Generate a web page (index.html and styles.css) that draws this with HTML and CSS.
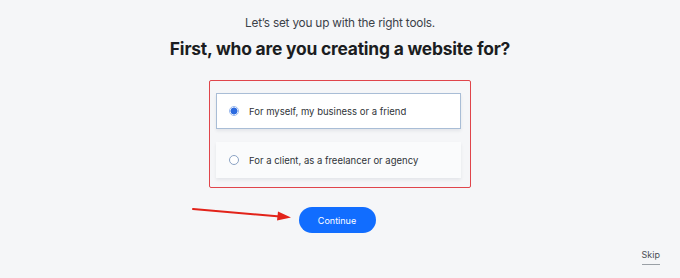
FILE: index.html
```html
<!DOCTYPE html>
<html lang="en">
<head>
    <meta charset="UTF-8">
    <meta name="viewport" content="width=device-width, initial-scale=1.0">
    <title>Website setup</title>
    <link rel="stylesheet" href="styles.css">
</head>
<body>
    <div class="page">
        <!-- Cabeçalho com as perguntas -->
        <p class="subtitle">Let’s set you up with the right tools.</p>
        <h1 class="title">First, who are you creating a website for?</h1>

        <!-- Opções marcadas em vermelho -->
        <div class="options">
            <label class="option selected">
                <span class="radio"></span>
                <span class="label">For myself, my business or a friend</span>
            </label>
            <label class="option">
                <span class="radio"></span>
                <span class="label">For a client, as a freelancer or agency</span>
            </label>
        </div>

        <div class="actions">
            <!-- Seta vermelha apontando para o botão -->
            <svg class="arrow" width="104" height="16" viewBox="0 0 104 16">
                <path d="M1 2 L88 9.5" stroke="#e2231a" stroke-width="2" stroke-linecap="round"/>
                <path d="M86 4.5 L99 10.5 L85 13.5 Z" fill="#e2231a"/>
            </svg>
            <button class="continue">Continue</button>
        </div>
    </div>

    <a class="skip" href="#">Skip</a>
</body>
</html>
```

FILE: styles.css
```css
/* Fundo e fonte da página */
body {
    margin: 0;
    height: 278px;
    background-color: #f5f6f8;
    font-family: Inter, "Noto Sans", sans-serif;
    color: #20303c;
    position: relative;
    overflow: hidden;
}

.page {
    display: flex;
    flex-direction: column;
    align-items: center;
    padding-top: 16px;
}

.subtitle {
    margin: 0;
    font-size: 11.8px;
    color: #3b4148;
    letter-spacing: -0.2px;
}

.title {
    margin: 8px 0 0;
    font-size: 17.4px;
    font-weight: 700;
    color: #1b1d21;
    letter-spacing: -0.2px;
}

/* Caixa vermelha em volta das opções */
.options {
    margin-top: 21px;
    width: 245px;
    padding: 12px 9px 9px 6px;
    border: 1.5px solid #e0454b;
    border-radius: 2px;
    display: flex;
    flex-direction: column;
    gap: 13px;
}

.option {
    height: 34px;
    display: flex;
    align-items: center;
    padding-left: 12px;
    background: #fafbfc;
    border: 1px solid transparent;
    box-shadow: 0 2px 3px rgba(20, 40, 70, 0.08);
    font-size: 9.5px;
    color: #2f3439;
    cursor: pointer;
}

.option.selected {
    background: #fff;
    border-color: #a9bdd6;
}

.radio {
    width: 8px;
    height: 8px;
    border: 1px solid #8ba3c4;
    border-radius: 50%;
    margin-right: 10px;
    background: #fff;
    box-sizing: content-box;
}

.option.selected .radio {
    border-color: #9bb9ee;
    background: radial-gradient(circle, #2d6be0 0 3.2px, #fff 3.8px);
}

/* Botão continuar com a seta ao lado */
.actions {
    margin-top: 19px;
    margin-right: 6px;
    position: relative;
}

.continue {
    width: 77px;
    height: 26px;
    border: none;
    border-radius: 13px;
    background-color: #116dff;
    color: #fff;
    font-family: inherit;
    font-size: 9px;
    cursor: pointer;
}

.arrow {
    position: absolute;
    left: -107px;
    top: 0;
}

.skip {
    position: absolute;
    right: 20px;
    bottom: 13px;
    font-size: 9px;
    color: #4a4f55;
    text-decoration: none;
    padding-bottom: 4px;
    border-bottom: 1px solid #9aa0a6;
}
```
